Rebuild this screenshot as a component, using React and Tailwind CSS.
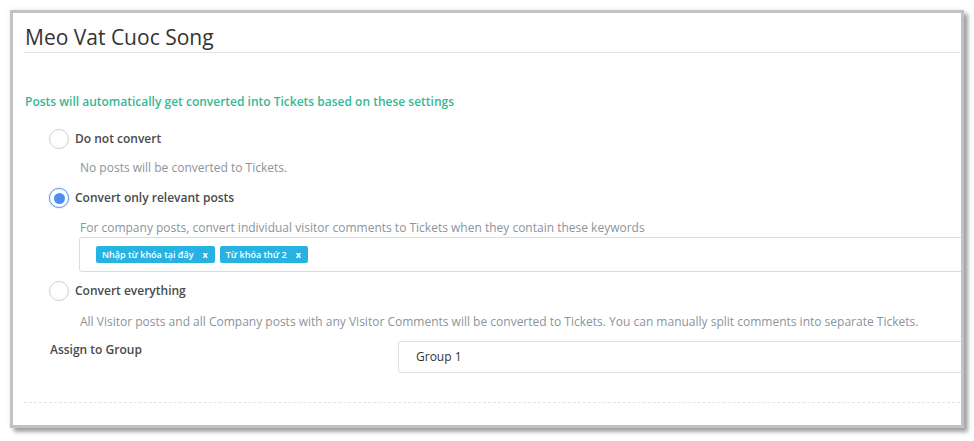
import React from "react";

function Radio({ checked }) {
  return checked ? (
    <div className="w-[20px] h-[20px] rounded-full border-[1.5px] border-[#5f9bec] bg-white flex items-center justify-center shadow-[0_0_2px_rgba(80,140,230,0.5)]">
      <div className="w-[11px] h-[11px] rounded-full bg-[#4d8ef0]" />
    </div>
  ) : (
    <div className="w-[20px] h-[20px] rounded-full border border-[#cfcfcf] bg-white" />
  );
}

function Tag({ children }) {
  return (
    <div className="h-[17px] flex items-center bg-[#27b2e2] rounded-[2px] pl-[6px] pr-[7px] text-white text-[9px] font-semibold leading-none">
      <span>{children}</span>
      <span className="ml-[9px] font-bold">x</span>
    </div>
  );
}

export default function App() {
  return (
    <div
      className="w-[974px] h-[441px] bg-white overflow-hidden pt-[10px] pl-[10px]"
      style={{ fontFamily: '"Open Sans", "Noto Sans", sans-serif' }}
    >
      <div className="w-[954px] h-[418px] border-[3px] border-[#c2c2c2] bg-white overflow-hidden shadow-[4px_4px_4px_rgba(0,0,0,0.35),0_0_6px_rgba(0,0,0,0.08)]">
        <div className="pl-[11px] w-[1100px]">
          <div className="w-[936px] pt-[9px] border-b border-[#e2e2e2]">
            <h1 className="h-[30px] leading-[30px] text-[21px] font-normal text-[#333] pl-[1px]">
              Meo Vat Cuoc Song
            </h1>
          </div>

          <div className="mt-[40px] h-[18px] leading-[18px] text-[12px] font-semibold text-[#35b896] pl-[1px]">
            Posts will automatically get converted into Tickets based on these settings
          </div>

          <div className="ml-[25px] mt-[18px] h-[20px] flex items-center gap-[6px]">
            <Radio />
            <span className="text-[12px] font-semibold text-[#4a4a4a]">Do not convert</span>
          </div>
          <div className="ml-[56px] mt-[10px] h-[18px] leading-[18px] text-[12px] text-[#8b949b]">
            No posts will be converted to Tickets.
          </div>

          <div className="ml-[25px] mt-[11px] h-[20px] flex items-center gap-[6px]">
            <Radio checked />
            <span className="text-[12px] font-semibold text-[#4a4a4a]">Convert only relevant posts</span>
          </div>
          <div className="ml-[56px] mt-[11px] h-[18px] leading-[18px] text-[12px] text-[#8b949b]">
            For company posts, convert individual visitor comments to Tickets when they contain these keywords
          </div>
          <div className="ml-[55px] w-[960px] h-[35px] border border-[#dcdcdc] rounded-[3px] flex items-center gap-[5px] pl-[16px]">
            <Tag>Nhập từ khóa tại đây</Tag>
            <Tag>Từ khóa thứ 2</Tag>
          </div>

          <div className="ml-[25px] mt-[9px] h-[20px] flex items-center gap-[6px]">
            <Radio />
            <span className="text-[12px] font-semibold text-[#4a4a4a]">Convert everything</span>
          </div>
          <div className="ml-[56px] mt-[12px] h-[18px] leading-[18px] text-[12px] text-[#8b949b] whitespace-nowrap">
            All Visitor posts and all Company posts with any Visitor Comments will be converted to Tickets. You can manually split comments into separate Tickets.
          </div>

          <div className="mt-[10px] flex items-start">
            <div className="ml-[26px] w-[348px] h-[18px] leading-[18px] text-[12px] font-semibold text-[#4a4a4a]">
              Assign to Group
            </div>
            <div className="w-[700px] h-[32px] border border-[#dedede] rounded-[3px] flex items-center pl-[17px] text-[12px] text-[#333]">
              Group 1
            </div>
          </div>

          <div className="mt-[29px] w-[936px] border-t border-dashed border-[#e3e3e3]" />
        </div>
      </div>
    </div>
  );
}
